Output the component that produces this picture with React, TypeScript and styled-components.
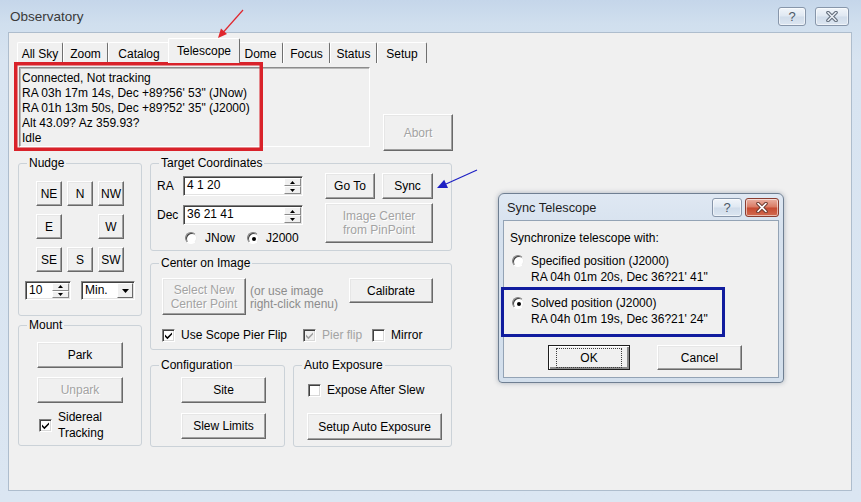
import React from "react";
import styled, { createGlobalStyle } from "styled-components";

const GlobalStyle = createGlobalStyle`
  html, body { margin: 0; padding: 0; }
  body {
    width: 861px; height: 502px; overflow: hidden;
    font-family: "Liberation Sans", Arial, sans-serif;
    font-size: 12px; color: #000; background: #d6e3f1;
  }
  *, *::before, *::after { box-sizing: border-box; }
`;

const Desktop = styled.div`
  position: relative;
  width: 861px;
  height: 502px;
  overflow: hidden;
`;

const MainWindow = styled.div`
  width: 861px;
  height: 502px;
  display: flex;
  flex-direction: column;
  background: linear-gradient(180deg, #c5d6ea 0px, #d0dfee 24px, #d8e4f1 60px, #dbe6f2 100%);
`;

const TitleBar = styled.div`
  height: 32px;
  flex: none;
  display: flex;
  align-items: flex-start;
  padding: 0 12px 0 10px;
`;

const TitleText = styled.div`
  flex: 1;
  margin-top: 8px;
  font-size: 13.5px;
  line-height: 18px;
  color: #3a3a3a;
`;

const CaptionGroup = styled.div`
  display: flex;
  gap: 9px;
  margin-top: 7px;
`;

const CaptionButton = styled.div<{ $w: number; $danger?: boolean }>`
  width: ${(p) => p.$w}px;
  height: 19px;
  border: 1px solid ${(p) => (p.$danger ? "#8a3d31" : "#8796aa")};
  border-radius: 3px;
  background: ${(p) =>
    p.$danger
      ? "linear-gradient(180deg, #eab1a3 0%, #d97a63 48%, #c64a31 52%, #d26a4f 100%)"
      : "linear-gradient(180deg, #f1f5fa 0%, #dfe8f2 48%, #d0dcea 52%, #dce6f1 100%)"};
  box-shadow: inset 0 0 0 1px rgba(255, 255, 255, 0.55);
  display: flex;
  align-items: center;
  justify-content: center;
  color: #4c5867;
  font-size: 13px;
  line-height: 1;
`;

const Client = styled.div`
  flex: 1;
  margin: 0 9px 11px 8px;
  background: #f0f0f0;
  border: 1px solid #aebdcd;
  display: flex;
  flex-direction: column;
`;

const TabRow = styled.div`
  display: flex;
  align-items: flex-end;
  height: 25px;
  margin: 5px 0 0 8px;
`;

const Tab = styled.div<{ $w: number; $active?: boolean }>`
  width: ${(p) => p.$w}px;
  height: ${(p) => (p.$active ? 25 : 21)}px;
  margin: 0 ${(p) => (p.$active ? -2 : 0)}px;
  position: relative;
  z-index: ${(p) => (p.$active ? 1 : 0)};
  display: flex;
  align-items: center;
  justify-content: center;
  padding-top: ${(p) => (p.$active ? 0 : 1)}px;
  background: #f0f0f0;
  border-top: 1px solid #ffffff;
  border-left: 1px solid #ffffff;
  border-right: 1px solid #6f6f6f;
  border-radius: 2px 2px 0 0;
  white-space: nowrap;
`;

const TabPage = styled.div`
  flex: 1;
  display: flex;
  flex-direction: column;
  padding: 4px 0 0 9px;
`;

const TopRow = styled.div`
  display: flex;
  height: 84px;
`;

const StatusBox = styled.div`
  width: 351px;
  height: 80px;
  margin-left: 1px;
  padding: 3px 2px 0 2px;
  border: 1px solid;
  border-color: #8c8c8c #ffffff #ffffff #8c8c8c;
  box-shadow: inset 1px 1px #b9b9b9;
  line-height: 15px;
  white-space: nowrap;
  overflow: hidden;
`;

const Btn = styled.button<{ $w: number; $h: number; $disabled?: boolean; $default?: boolean }>`
  width: ${(p) => p.$w}px;
  height: ${(p) => p.$h}px;
  flex: none;
  padding: 0;
  margin: 0;
  font-family: inherit;
  font-size: 12px;
  line-height: 14px;
  display: flex;
  align-items: center;
  justify-content: center;
  text-align: center;
  background: #f0f0f0;
  border: 1px solid;
  border-color: ${(p) => (p.$default ? "#1e1e1e" : "#ffffff #696969 #696969 #ffffff")};
  box-shadow: ${(p) =>
    p.$default
      ? "inset 1px 1px #ffffff, inset -2px -2px #8a8a8a"
      : "inset -1px -1px #a0a0a0, inset 1px 1px #e6e6e6"};
  color: ${(p) => (p.$disabled ? "#a3a3a3" : "#000")};
  text-shadow: ${(p) => (p.$disabled ? "1px 1px #ffffff" : "none")};
  cursor: default;
`;

const FocusRing = styled.span`
  border: 1px dotted #3c3c3c;
  padding: 2px 23px 2px 23px;
  line-height: 14px;
`;

const AbortSlot = styled.div`
  margin-left: 13px;
  align-self: flex-end;
`;

const MainRow = styled.div`
  display: flex;
  margin-top: 5px;
`;

const LeftCol = styled.div`
  width: 124px;
  display: flex;
  flex-direction: column;
  gap: 2px;
`;

const RightCol = styled.div`
  width: 302px;
  margin-left: 8px;
  display: flex;
  flex-direction: column;
`;

const Group = styled.fieldset<{ $h: number; $mt?: number; $w?: number }>`
  margin: ${(p) => p.$mt ?? 0}px 0 0 0;
  min-width: 0;
  width: ${(p) => (p.$w ? `${p.$w}px` : "auto")};
  height: ${(p) => p.$h}px;
  padding: 0;
  border: 1px solid #cbd2d8;
  border-radius: 3px;
`;

const Legend = styled.legend`
  margin: 0 auto 0 8px;
  padding: 0 2px;
  font-size: 12px;
  line-height: 14px;
  text-align: left;
`;

const GroupBody = styled.div<{ $pad: string }>`
  padding: ${(p) => p.$pad};
`;

const DirGrid = styled.div`
  display: grid;
  grid-template-columns: repeat(3, 26px);
  grid-auto-rows: 25px;
  column-gap: 5px;
  row-gap: 8px;
  margin-left: 11px;
`;

const FlexRow = styled.div<{ $mt?: number; $ml?: number; $align?: string }>`
  display: flex;
  align-items: ${(p) => p.$align ?? "flex-start"};
  margin-top: ${(p) => p.$mt ?? 0}px;
  margin-left: ${(p) => p.$ml ?? 0}px;
`;

const FlexCol = styled.div<{ $mt?: number; $ml?: number }>`
  display: flex;
  flex-direction: column;
  margin-top: ${(p) => p.$mt ?? 0}px;
  margin-left: ${(p) => p.$ml ?? 0}px;
`;

const Sunken = styled.div<{ $w: number; $h: number; $bg?: string }>`
  width: ${(p) => p.$w}px;
  height: ${(p) => p.$h}px;
  flex: none;
  display: flex;
  background: ${(p) => p.$bg ?? "#ffffff"};
  border: 1px solid;
  border-color: #828282 #ffffff #ffffff #828282;
  box-shadow: inset 1px 1px #404040, inset -1px -1px #e3e3e3;
`;

const FieldText = styled.span`
  flex: 1;
  padding: 0 0 0 3px;
  line-height: 17px;
  white-space: nowrap;
`;

const SpinButtons = styled.div`
  width: 17px;
  display: flex;
  flex-direction: column;
  margin: 1px 1px 1px 0;
`;

const SpinPart = styled.div`
  flex: 1;
  display: flex;
  align-items: center;
  justify-content: center;
  background: #f0f0f0;
  border: 1px solid;
  border-color: #ffffff #8a8a8a #8a8a8a #ffffff;
`;

const DropButton = styled.div`
  width: 16px;
  margin: 1px 1px 1px 0;
  display: flex;
  align-items: center;
  justify-content: center;
  background: #f0f0f0;
  border: 1px solid;
  border-color: #ffffff #6a6a6a #6a6a6a #ffffff;
`;

const FieldLabel = styled.span<{ $w: number }>`
  width: ${(p) => p.$w}px;
  flex: none;
  line-height: 14px;
`;

const Hint = styled.div`
  width: 99px;
  margin: 7px 0 0 4px;
  line-height: 13px;
  color: #8c8c8c;
  white-space: nowrap;
`;

const CheckItem = styled.label<{ $ml?: number; $disabled?: boolean }>`
  display: flex;
  align-items: center;
  margin-left: ${(p) => p.$ml ?? 0}px;
  color: ${(p) => (p.$disabled ? "#a3a3a3" : "#000")};
  line-height: 14px;
  white-space: nowrap;
`;

const CheckBoxBox = styled.span<{ $disabled?: boolean }>`
  width: 13px;
  height: 13px;
  flex: none;
  display: flex;
  align-items: center;
  justify-content: center;
  background: ${(p) => (p.$disabled ? "#f0f0f0" : "#ffffff")};
  color: ${(p) => (p.$disabled ? "#a0a0a0" : "#000")};
  border: 1px solid;
  border-color: #808080 #ffffff #ffffff #808080;
  box-shadow: inset 1px 1px #404040, inset -1px -1px #d8d8d8;
`;

const CheckText = styled.span`
  margin-left: 6px;
`;

const TwoLines = styled.span`
  display: block;
  line-height: 16px;
`;

const RadioCircle = styled.span<{ $mt?: number }>`
  width: 12px;
  height: 12px;
  flex: none;
  margin-top: ${(p) => p.$mt ?? 0}px;
  border-radius: 50%;
  display: flex;
  align-items: center;
  justify-content: center;
  background: #ffffff;
  border: 1px solid;
  border-color: #808080 #ececec #ffffff #808080;
  box-shadow: inset 1px 1px #404040;
`;

const RadioDot = styled.span`
  width: 4px;
  height: 4px;
  border-radius: 50%;
  background: #000;
  margin: 1px 0 0 1px;
`;

const RadioText = styled.span<{ $ml: number }>`
  margin-left: ${(p) => p.$ml}px;
`;

/* Dialog */
const Dialog = styled.div`
  position: absolute;
  left: 498px;
  top: 193px;
  width: 286px;
  height: 190px;
  display: flex;
  flex-direction: column;
  padding: 0 4px 4px 4px;
  border: 1px solid #6f7f92;
  border-radius: 6px 6px 4px 4px;
  background: linear-gradient(180deg, #dfe8f3 0%, #d6e1ee 20%, #d3dfec 100%);
  box-shadow: 0 0 5px rgba(40, 60, 90, 0.35);
`;

const DialogTitleBar = styled.div`
  height: 26px;
  flex: none;
  display: flex;
  align-items: flex-start;
`;

const DialogTitle = styled.div`
  flex: 1;
  margin: 6px 0 0 4px;
  font-size: 12.8px;
  line-height: 16px;
  color: #1e1e1e;
`;

const DialogCaptions = styled.div`
  display: flex;
  gap: 3px;
  margin-top: 4px;
`;

const DialogClient = styled.div`
  flex: 1;
  background: #f0f0f0;
  border: 1px solid #93a3b5;
  padding: 10px 0 0 6px;
  display: flex;
  flex-direction: column;
`;

const Line = styled.div`
  line-height: 14px;
  white-space: nowrap;
`;

const Option = styled.div<{ $mt: number }>`
  display: flex;
  align-items: flex-start;
  margin: ${(p) => p.$mt}px 0 0 2px;
`;

const OptionText = styled.div`
  margin-left: 7px;
  line-height: 16px;
  white-space: nowrap;
`;

const Annotations = styled.svg`
  position: absolute;
  left: 0;
  top: 0;
  pointer-events: none;
`;

const CheckMark = () => (
  <svg width="9" height="9" viewBox="0 0 9 9">
    <path d="M1 3.6 L3.4 6 L8 1.4 L8 3.6 L3.4 8.2 L1 5.8 Z" fill="currentColor" />
  </svg>
);

const CheckBox: React.FC<{ checked?: boolean; disabled?: boolean; children?: React.ReactNode; ml?: number }> = ({
  checked,
  disabled,
  children,
  ml,
}) => (
  <CheckItem $ml={ml} $disabled={disabled}>
    <CheckBoxBox $disabled={disabled}>{checked && <CheckMark />}</CheckBoxBox>
    {children && <CheckText>{children}</CheckText>}
  </CheckItem>
);

const UpArrow = () => (
  <svg width="5" height="3" viewBox="0 0 5 3">
    <path d="M0 3 L2.5 0 L5 3 Z" fill="#000" />
  </svg>
);
const DownArrow = ({ w = 5, h = 3 }: { w?: number; h?: number }) => (
  <svg width={w} height={h} viewBox={`0 0 ${w} ${h}`}>
    <path d={`M0 0 L${w / 2} ${h} L${w} 0 Z`} fill="#000" />
  </svg>
);

const SpinEdit: React.FC<{ value: string; w: number; h?: number }> = ({ value, w, h = 20 }) => (
  <Sunken $w={w} $h={h}>
    <FieldText>{value}</FieldText>
    <SpinButtons>
      <SpinPart>
        <UpArrow />
      </SpinPart>
      <SpinPart>
        <DownArrow />
      </SpinPart>
    </SpinButtons>
  </Sunken>
);

const CloseGlyph = ({ light }: { light?: boolean }) => (
  <svg width="14" height="11" viewBox="0 0 14 11">
    <path d="M3 1.5 L11 9.5 M11 1.5 L3 9.5" stroke={light ? "#6b3a30" : "#5d6876"} strokeWidth="3.6" strokeLinecap="round" />
    <path d="M3 1.5 L11 9.5 M11 1.5 L3 9.5" stroke={light ? "#ffffff" : "#e9eef5"} strokeWidth="1.6" strokeLinecap="round" />
  </svg>
);

const tabs = [
  { label: "All Sky", w: 46 },
  { label: "Zoom", w: 45 },
  { label: "Catalog", w: 62 },
  { label: "Telescope", w: 72, active: true },
  { label: "Dome", w: 45 },
  { label: "Focus", w: 47 },
  { label: "Status", w: 47 },
  { label: "Setup", w: 50 },
];

const statusLines = [
  "Connected, Not tracking",
  "RA 03h 17m 14s, Dec +89?56' 53\" (JNow)",
  "RA 01h 13m 50s, Dec +89?52' 35\" (J2000)",
  "Alt 43.09? Az 359.93?",
  "Idle",
];

const dirs = ["NE", "N", "NW", "E", "", "W", "SE", "S", "SW"];

export default function App() {
  return (
    <Desktop>
      <GlobalStyle />
      <MainWindow>
        <TitleBar>
          <TitleText>Observatory</TitleText>
          <CaptionGroup>
            <CaptionButton $w={28}>?</CaptionButton>
            <CaptionButton $w={34}>
              <CloseGlyph />
            </CaptionButton>
          </CaptionGroup>
        </TitleBar>
        <Client>
          <TabRow>
            {tabs.map((t) => (
              <Tab key={t.label} $w={t.w} $active={t.active}>
                {t.label}
              </Tab>
            ))}
          </TabRow>
          <TabPage>
            <TopRow>
              <StatusBox>
                {statusLines.map((l) => (
                  <div key={l}>{l}</div>
                ))}
              </StatusBox>
              <AbortSlot>
                <Btn $w={70} $h={37} $disabled>
                  Abort
                </Btn>
              </AbortSlot>
            </TopRow>
            <MainRow>
              <LeftCol>
                <Group $h={160}>
                  <Legend>Nudge</Legend>
                  <GroupBody $pad="11px 6px 0 6px">
                    <DirGrid>
                      {dirs.map((d, i) =>
                        d ? (
                          <Btn key={i} $w={26} $h={25}>
                            {d}
                          </Btn>
                        ) : (
                          <span key={i} />
                        )
                      )}
                    </DirGrid>
                    <FlexRow $mt={9}>
                      <SpinEdit value="10" w={46} h={19} />
                      <FlexRow $ml={10}>
                        <Sunken $w={54} $h={19}>
                          <FieldText>Min.</FieldText>
                          <DropButton>
                            <DownArrow w={7} h={4} />
                          </DropButton>
                        </Sunken>
                      </FlexRow>
                    </FlexRow>
                  </GroupBody>
                </Group>
                <Group $h={128}>
                  <Legend>Mount</Legend>
                  <GroupBody $pad="10px 0 0 18px">
                    <Btn $w={86} $h={26}>
                      Park
                    </Btn>
                    <FlexCol $mt={9}>
                      <Btn $w={86} $h={26} $disabled>
                        Unpark
                      </Btn>
                    </FlexCol>
                    <FlexCol $mt={6} $ml={2}>
                      <CheckBox checked>
                        <TwoLines>
                          Sidereal
                          <br />
                          Tracking
                        </TwoLines>
                      </CheckBox>
                    </FlexCol>
                  </GroupBody>
                </Group>
              </LeftCol>
              <RightCol>
                <Group $h={95}>
                  <Legend>Target Coordinates</Legend>
                  <GroupBody $pad="3px 0 0 6px">
                    <FlexRow>
                      <FlexCol $mt={3}>
                        <FlexRow $align="center">
                          <FieldLabel $w={26}>RA</FieldLabel>
                          <SpinEdit value="4 1 20" w={120} />
                        </FlexRow>
                        <FlexRow $align="center" $mt={9}>
                          <FieldLabel $w={26}>Dec</FieldLabel>
                          <SpinEdit value="36 21 41" w={120} />
                        </FlexRow>
                        <FlexRow $align="center" $mt={6} $ml={28}>
                          <RadioCircle />
                          <RadioText $ml={8}>JNow</RadioText>
                          <FlexRow $ml={12} $align="center">
                            <RadioCircle>
                              <RadioDot />
                            </RadioCircle>
                            <RadioText $ml={7}>J2000</RadioText>
                          </FlexRow>
                        </FlexRow>
                      </FlexCol>
                      <FlexCol $ml={22}>
                        <FlexRow>
                          <Btn $w={50} $h={26}>
                            Go To
                          </Btn>
                          <FlexRow $ml={7}>
                            <Btn $w={51} $h={26}>
                              Sync
                            </Btn>
                          </FlexRow>
                        </FlexRow>
                        <FlexCol $mt={4}>
                          <Btn $w={108} $h={40} $disabled>
                            Image Center
                            <br />
                            from PinPoint
                          </Btn>
                        </FlexCol>
                      </FlexCol>
                    </FlexRow>
                  </GroupBody>
                </Group>
                <Group $h={94} $mt={5}>
                  <Legend>Center on Image</Legend>
                  <GroupBody $pad="8px 0 0 11px">
                    <FlexRow>
                      <Btn $w={84} $h={37} $disabled>
                        Select New
                        <br />
                        Center Point
                      </Btn>
                      <Hint>
                        (or use image
                        <br />
                        right-click menu)
                      </Hint>
                      <Btn $w={84} $h={25}>
                        Calibrate
                      </Btn>
                    </FlexRow>
                    <FlexRow $mt={13} $align="center">
                      <CheckBox checked>Use Scope Pier Flip</CheckBox>
                      <CheckBox checked disabled ml={16}>
                        Pier flip
                      </CheckBox>
                      <CheckBox ml={10}>Mirror</CheckBox>
                    </FlexRow>
                  </GroupBody>
                </Group>
                <FlexRow $mt={8}>
                  <Group $w={135} $h={89}>
                    <Legend>Configuration</Legend>
                    <GroupBody $pad="5px 0 0 30px">
                      <Btn $w={85} $h={26}>
                        Site
                      </Btn>
                      <FlexCol $mt={10}>
                        <Btn $w={85} $h={26}>
                          Slew Limits
                        </Btn>
                      </FlexCol>
                    </GroupBody>
                  </Group>
                  <FlexRow $ml={8}>
                    <Group $w={159} $h={89}>
                      <Legend>Auto Exposure</Legend>
                      <GroupBody $pad="11px 0 0 13px">
                        <FlexRow $ml={1}>
                          <CheckBox>Expose After Slew</CheckBox>
                        </FlexRow>
                        <FlexCol $mt={16}>
                          <Btn $w={135} $h={27}>
                            Setup Auto Exposure
                          </Btn>
                        </FlexCol>
                      </GroupBody>
                    </Group>
                  </FlexRow>
                </FlexRow>
              </RightCol>
            </MainRow>
          </TabPage>
        </Client>
      </MainWindow>

      <Dialog>
        <DialogTitleBar>
          <DialogTitle>Sync Telescope</DialogTitle>
          <DialogCaptions>
            <CaptionButton $w={30}>?</CaptionButton>
            <CaptionButton $w={34} $danger>
              <CloseGlyph light />
            </CaptionButton>
          </DialogCaptions>
        </DialogTitleBar>
        <DialogClient>
          <Line>Synchronize telescope with:</Line>
          <Option $mt={8}>
            <RadioCircle $mt={2} />
            <OptionText>
              Specified position (J2000)
              <br />
              RA 04h 01m 20s, Dec 36?21' 41"
            </OptionText>
          </Option>
          <Option $mt={10}>
            <RadioCircle $mt={2}>
              <RadioDot />
            </RadioCircle>
            <OptionText>
              Solved position (J2000)
              <br />
              RA 04h 01m 19s, Dec 36?21' 24"
            </OptionText>
          </Option>
          <FlexRow $mt={18} $ml={38}>
            <Btn $w={82} $h={25} $default>
              <FocusRing>OK</FocusRing>
            </Btn>
            <FlexRow $ml={27}>
              <Btn $w={85} $h={25}>
                Cancel
              </Btn>
            </FlexRow>
          </FlexRow>
        </DialogClient>
      </Dialog>

      <Annotations width="861" height="502" viewBox="0 0 861 502">
        <rect x="15.75" y="63.75" width="245.5" height="85.5" fill="none" stroke="#d9222a" strokeWidth="3.5" />
        <rect x="502.5" y="288.5" width="221" height="47" fill="none" stroke="#101c9e" strokeWidth="3" />
        <line x1="243" y1="10" x2="223.5" y2="32" stroke="#e0262d" strokeWidth="1.2" />
        <polygon points="218,38 227,34 221,28.6" fill="#e0262d" />
        <line x1="477" y1="170" x2="446" y2="184" stroke="#1d20c4" strokeWidth="1.2" />
        <polygon points="437,188 448,188 444.2,179.8" fill="#1d20c4" />
      </Annotations>
    </Desktop>
  );
}
